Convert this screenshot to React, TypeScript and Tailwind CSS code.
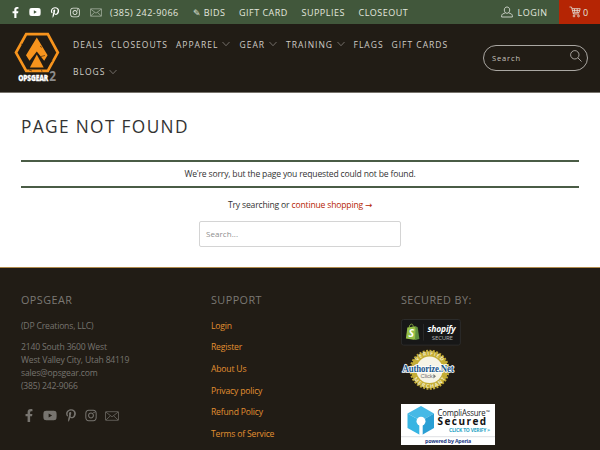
import type { ReactNode } from 'react';
import { FaFacebookF, FaPinterestP, FaYoutube, FaInstagram } from 'react-icons/fa';

interface NavItem {
  label: string;
  menu?: boolean;
  width: string;
}

const TOP_LINKS = [
  { label: '(385) 242-9066', width: 'w-[82.5px]' },
  { label: '✎ BIDS', width: 'w-[46.5px]' },
  { label: 'GIFT CARD', width: 'w-[62.5px]' },
  { label: 'SUPPLIES', width: 'w-[57px]' },
  { label: 'CLOSEOUT', width: 'w-[60px]' },
];

const NAV_ITEMS: NavItem[] = [
  { label: 'DEALS', width: 'w-[38px]' },
  { label: 'CLOSEOUTS', width: 'w-[65px]' },
  { label: 'APPAREL', menu: true, width: 'w-[63.5px]' },
  { label: 'GEAR', menu: true, width: 'w-[46.5px]' },
  { label: 'TRAINING', menu: true, width: 'w-[67.5px]' },
  { label: 'FLAGS', width: 'w-[38px]' },
  { label: 'GIFT CARDS', width: 'w-[60px]' },
  { label: 'BLOGS', menu: true, width: 'w-[60px]' },
];

const SUPPORT_LINKS = [
  'Login',
  'Register',
  'About Us',
  'Privacy policy',
  'Refund Policy',
  'Terms of Service',
];

function Mail({ className }: { className?: string }) {
  return (
    <svg viewBox="0 0 14 10" fill="none" stroke="currentColor" strokeWidth="0.7" className={className}>
      <rect x="0.5" y="0.7" width="13" height="8.6" rx="0.3" />
      <path d="M1 1.2l6 4.6 6-4.6M1 8.9l4.3-4M13 8.9l-4.3-4" />
    </svg>
  );
}

function Chevron() {
  return (
    <svg viewBox="0 0 8 6" fill="none" stroke="currentColor" strokeWidth="0.6" className="ml-[4px] h-[6px] w-[8px] shrink-0 text-[#a9a59f]">
      <path d="M0.5 1L4 4.7 7.5 1" />
    </svg>
  );
}

function Logo() {
  return (
    <svg viewBox="0 0 46 50" className="mt-[8px] h-[50px] w-[46px] shrink-0 overflow-visible">
      <path d="M12.2 2.1h21.6l10 18.5-10 18.3H12.2L2 20.6z" fill="none" stroke="#f7941d" strokeWidth="2.7" />
      <path d="M22.8 5.5l10.8 17.8-3.4 5.5-7.4-9.400-7.300 9.400-3.500-5.500z" fill="#f7941d" />
      <path d="M22.800 22.500l6.900 13H15.900z" fill="#f7941d" />
      <path
        d="M31 9.6l3 1M35.5 31l3-2.2M7 12l2.5 1M27 24.5l4-1M15 38l3 1M27.5 37.8l.5 2M26 14l2 1.5"
        stroke="#211c15"
        strokeWidth="0.6"
      />
      <text
        x="4.2"
        y="49"
        textLength="30"
        lengthAdjust="spacingAndGlyphs"
        className="fill-white stroke-white stroke-[0.3px] font-['Open_Sans',sans-serif] text-[9.4px] font-extrabold"
      >
        OPSGEAR
      </text>
      <text
        x="35.2"
        y="48.8"
        textLength="6.6"
        lengthAdjust="spacingAndGlyphs"
        className="fill-[#8b8b8b] font-['Open_Sans',sans-serif] text-[13.5px] font-bold"
      >
        2
      </text>
    </svg>
  );
}

function ShopifyBadge() {
  return (
    <svg viewBox="0 0 60 27" className="h-[27px] w-[60px]">
      <rect x="0.4" y="0.5" width="59" height="25.6" rx="2.2" fill="#171717" stroke="#303030" strokeWidth="0.8" />
      <path d="M8.2 8.5c.2-2.2 1.2-3.4 2.4-3.4s1.6 1.2 1.6 2.8" fill="none" stroke="#95bf47" strokeWidth="0.8" />
      <path d="M6.3 8.6l8.4-1.4 1 13-3 .6-7.8-1.2z" fill="#95bf47" />
      <path d="M14.7 7.2l2 1.1 1.7 11.6-4.4 1z" fill="#5e8e3e" />
      <text x="7.4" y="18" className="fill-white font-['Open_Sans',sans-serif] text-[10.5px] font-bold italic">
        S
      </text>
      <path d="M22.5 5v16.5" stroke="#343434" strokeWidth="0.6" />
      <text
        x="26.5"
        y="12.8"
        textLength="28"
        lengthAdjust="spacingAndGlyphs"
        className="fill-white font-['Open_Sans',sans-serif] text-[8.5px] font-bold italic"
      >
        shopify
      </text>
      <text
        x="30.8"
        y="20.7"
        textLength="21"
        lengthAdjust="spacingAndGlyphs"
        className="fill-[#b0b0b0] font-['Open_Sans',sans-serif] text-[5.6px]"
      >
        SECURE
      </text>
    </svg>
  );
}

function AuthorizeSeal() {
  return (
    <svg viewBox="0 0 54 44" className="h-[44px] w-[54px] overflow-visible">
      <defs>
        <path id="seal-top" d="M13.8 20.8a14.700 14.700 0 0 1 29.400 0" />
        <path id="seal-bottom" d="M10 20.400a18.500 18.500 0 0 0 37 0" />
      </defs>
      <circle cx="28.5" cy="20.8" r="18.5" fill="#c4ad35" />
      <circle cx="28.5" cy="20.8" r="19" fill="none" stroke="#c4ad35" strokeWidth="2" strokeDasharray="2 1.42" />
      <circle cx="28.5" cy="20.8" r="13.2" fill="#f6f4e6" />
      <text textAnchor="middle" className="fill-[#f7f3d8] font-['Open_Sans',sans-serif] text-[5.2px] font-semibold">
        <textPath href="#seal-top" startOffset="50%" textLength="28">
          VERIFIED
        </textPath>
      </text>
      <text textAnchor="middle" className="fill-[#f7f3d8] font-['Open_Sans',sans-serif] text-[5.2px] font-semibold">
        <textPath href="#seal-bottom" startOffset="50%" textLength="38">
          MERCHANT
        </textPath>
      </text>
      <text
        x="1.5"
        y="23"
        textLength="51"
        lengthAdjust="spacingAndGlyphs"
        stroke="#ffffff"
        strokeWidth="1.6"
        paintOrder="stroke"
        className="fill-[#17558a] font-['Liberation_Serif',serif] text-[9.5px] font-bold"
      >
        Authorize.Net
      </text>
      <text
        x="19.6"
        y="29.2"
        textLength="12"
        lengthAdjust="spacingAndGlyphs"
        className="fill-[#777777] font-['Liberation_Sans',sans-serif] text-[5.5px]"
      >
        Click
      </text>
      <path d="M32.4 25l2.6 2.2-2.6 2.2z" fill="#777777" />
    </svg>
  );
}

function CompliBadge() {
  return (
    <svg viewBox="0 0 94 41" className="h-[41px] w-[94px]">
      <rect width="94" height="41" fill="#ffffff" />
      <path d="M6.500 9.5L20 17v14.500L6.500 24z" fill="#37b5e3" />
      <path d="M20 2l13 7.500L20 17 6.500 9.500z" fill="#45b9e6" />
      <path d="M20 17l13-7.500V24L20 31.500z" fill="#2a9fd4" />
      <circle cx="20" cy="17.3" r="4.5" fill="#ffffff" />
      <path d="M18.3 20h3.400v12h-3.400z" fill="#ffffff" />
      <g className="font-['Open_Sans',sans-serif]">
        <text x="36.5" y="12" textLength="48" lengthAdjust="spacingAndGlyphs" className="fill-[#222222] text-[8.2px]">
          CompliAssure
        </text>
        <text x="85" y="10" className="fill-[#222222] text-[5px]">™</text>
        <text x="36.5" y="20.6" textLength="48.5" lengthAdjust="spacing" className="fill-[#111111] text-[10px] font-bold">
          Secured
        </text>
        <text x="48" y="27.6" textLength="41" lengthAdjust="spacingAndGlyphs" className="fill-[#26a3c4] text-[4.5px] font-bold">
          {'CLICK TO VERIFY >'}
        </text>
        <path d="M0 32.7h94" stroke="#c9cbd2" strokeWidth="0.6" />
        <text x="24" y="38.6" textLength="46" lengthAdjust="spacingAndGlyphs" className="fill-[#233a85] text-[5px] font-bold">
          powered by Aperia
        </text>
      </g>
    </svg>
  );
}

function FooterHeading({ children }: { children: ReactNode }) {
  return <h2 className="mb-[12.5px] text-[10.8px] leading-[14px] tracking-[0.45px] text-[#7b7873]">{children}</h2>;
}

export default function App() {
  return (
    <div className="h-[450px] w-[600px] overflow-hidden bg-white font-['Open_Sans',sans-serif] text-[8.6px] leading-[13px] tracking-[-0.18px] text-[#333333]">
      <div className="flex h-6 items-center bg-[#41573b] text-[9px] tracking-[0.48px] text-[#e3e7df]">
        <div className="flex h-full w-[110px] shrink-0 items-center pl-[11px]">
          <FaFacebookF className="mr-[9px] h-[11px] w-[9px] text-white" />
          <FaYoutube className="mr-[9px] h-[12px] w-[12px] text-white" />
          <FaPinterestP className="mr-[10px] h-[11px] w-[10px] text-white" />
          <FaInstagram className="mr-[10px] h-[11px] w-[10px]" />
          <Mail className="h-[9px] w-[12px] text-[#c5cdbf]" />
        </div>
        {TOP_LINKS.map(({ label, width }) => (
          <a key={label} className={`shrink-0 whitespace-nowrap ${width}`}>
            {label}
          </a>
        ))}
        <div className="ml-auto flex items-center whitespace-nowrap">
          <svg viewBox="0 0 12 12" fill="none" stroke="currentColor" strokeWidth="0.8" className="mr-[5px] h-[12px] w-[12px]">
            <path d="M6 1C4.3 1 3.3 2.3 3.3 4S4.4 7.3 6 7.3 8.7 5.7 8.7 4 7.7 1 6 1zM4.3 6.8L1.5 8.1C.8 8.6.6 9.5.6 11h10.8c0-1.5-.2-2.4-.9-2.9L7.7 6.8" />
          </svg>
          <span className="mr-[11.5px]">LOGIN</span>
        </div>
        <div className="flex h-full w-[41px] shrink-0 items-center bg-[#b52504] pl-[10px]">
          <svg viewBox="0 0 12 12" fill="none" stroke="currentColor" strokeWidth="0.8" className="mr-[2px] h-[12px] w-[12px]">
            <path d="M.5 1h2l1.9 7h5.8M2.9 2.7h8.3L10.1 6.5 4 7M5.3 2.7l.5 4M8.2 2.7V6.5M3.4 4.6h7.3" />
            <circle cx="5" cy="10" r="0.9" />
            <circle cx="9.5" cy="10" r="0.9" />
          </svg>
          <span>0</span>
        </div>
      </div>

      <header className="flex h-[69px] border-b border-[#77736c] bg-[#211c15] pl-[14px]">
        <Logo />
        <nav className="ml-[13px] flex w-[398px] flex-wrap content-start pt-[6.5px] text-[8.5px] tracking-[1px] text-[#cfccc7]">
          {NAV_ITEMS.map(({ label, menu, width }) => (
            <a key={label} className={`flex h-[27.5px] shrink-0 items-center whitespace-nowrap ${width}`}>
              {label}
              {menu && <Chevron />}
            </a>
          ))}
        </nav>
        <div className="mt-[21px] ml-auto mr-[12px] flex h-[26px] w-[105px] shrink-0 items-center justify-between rounded-full border border-[#aaa7a2] pr-[5px] pl-[8px] text-[7.5px] tracking-[0.85px] text-[#c6c3be]">
          <span>Search</span>
          <svg viewBox="0 0 12 12" fill="none" stroke="currentColor" strokeWidth="0.8" className="mb-[4px] h-[12px] w-[12px]">
            <circle cx="4.8" cy="4.8" r="4.2" />
            <path d="M7.9 7.9l3.6 3.6" />
          </svg>
        </div>
      </header>

      <main className="h-[174px] px-[21px] pt-[22px]">
        <h1 className="text-[17.3px] leading-[24px] tracking-[1.35px] whitespace-nowrap">PAGE NOT FOUND</h1>
        <p className="mt-[21px] flex h-[28px] items-center justify-center border-y-2 border-[#4a5c46]">
          We're sorry, but the page you requested could not be found.
        </p>
        <p className="mt-[11px] text-center">
          Try searching or{' '}
          <a className="text-[#b52504]">
            continue shopping <span className="font-['DejaVu_Sans',sans-serif]">→</span>
          </a>
        </p>
        <div className="mx-auto mt-[9px] flex h-[26px] w-[202px] items-center rounded-[2px] border border-[#d4d4d4] pb-[2px] pl-[6px] text-[8px] tracking-[0.05px] text-[#8e8e8e]">
          Search...
        </div>
      </main>

      <footer className="grid h-[183px] grid-cols-[190px_190px_1fr] border-t border-[#b08a4c] bg-[#211c15] pt-[25px] pl-[21px] text-[#77746f]">
        <section>
          <FooterHeading>OPSGEAR</FooterHeading>
          <p>(DP Creations, LLC)</p>
          <p className="mt-[8.5px]">
            2140 South 3600 West
            <br />
            West Valley City, Utah 84119
            <br />
            sales@opsgear.com
            <br />
            (385) 242-9066
          </p>
          <div className="mt-[15.5px] flex h-[14px] items-center">
            <FaFacebookF className="mr-[8px] ml-[2px] h-[13px] w-[12px]" />
            <FaYoutube className="mr-[8px] h-[15px] w-[14px]" />
            <FaPinterestP className="mr-[8px] h-[13px] w-[12px]" />
            <FaInstagram className="mr-[8px] h-[13px] w-[12px]" />
            <Mail className="h-[10px] w-[14px]" />
          </div>
        </section>
        <section>
          <FooterHeading>SUPPORT</FooterHeading>
          <ul className="flex flex-col gap-[8.7px] text-[#e29031]">
            {SUPPORT_LINKS.map((label) => (
              <li key={label}>{label}</li>
            ))}
          </ul>
        </section>
        <section className="flex flex-col items-start">
          <FooterHeading>SECURED BY:</FooterHeading>
          <div className="-mt-px">
            <ShopifyBadge />
          </div>
          <div className="mt-[3px]">
            <AuthorizeSeal />
          </div>
          <div className="mt-[11px]">
            <CompliBadge />
          </div>
        </section>
      </footer>
    </div>
  );
}
